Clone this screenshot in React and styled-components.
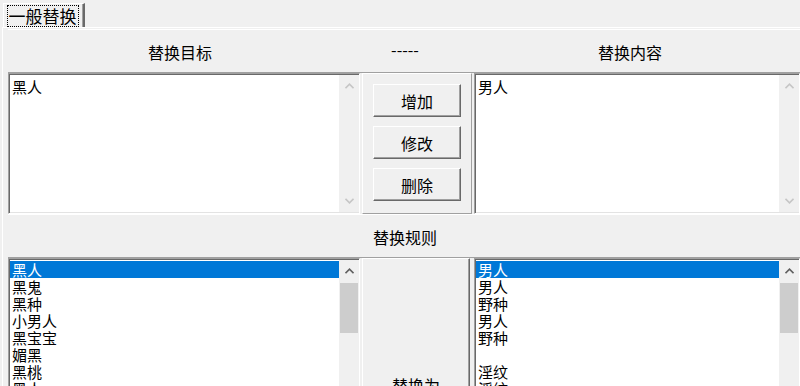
import React from 'react'
import styled, { createGlobalStyle } from 'styled-components'

const Global = createGlobalStyle`
  html, body { margin: 0; padding: 0; background: #f0f0f0; }
  body { font-family: "Noto Sans CJK SC", "Liberation Sans", sans-serif; color: #000; }
`

const Window = styled.div`
  width: 800px;
  height: 386px;
  overflow: hidden;
  background: #f0f0f0;
  font-size: 15px;
`

const TabStrip = styled.div`
  height: 27px;
  display: flex;
  align-items: flex-end;
  padding-left: 3px;
`

const Tab = styled.div`
  height: 24px;
  width: 82px;
  box-sizing: border-box;
  border-top: 1px solid #fff;
  border-left: 1px solid #fff;
  border-right: 2px solid #696969;
  box-shadow: inset -1px 0 0 #a0a0a0;
  display: flex;
  align-items: center;
  justify-content: center;
  padding-right: 2px;
`

const FocusText = styled.span`
  outline: 1px dotted #000;
  padding: 0 1px;
  line-height: 20px;
  font-size: 17px;
`

const Panel = styled.div`
  margin-left: 2px;
  border-top: 1px solid #fff;
  border-left: 1px solid #fff;
  padding: 1px 0 0 5px;
`

const HeaderRow = styled.div`
  height: 44px;
  display: grid;
  grid-template-columns: ${p => p.$cols || '1fr'};
  align-items: center;
  border-top: 1px solid #fff;
  border-bottom: 1px solid #a0a0a0;
  box-sizing: border-box;
  width: 794px;
`

const HeaderLabel = styled.div`
  text-align: center;
  font-size: 16px;
  padding-top: ${p => p.$dash ? '0' : '2px'};
  padding-bottom: ${p => p.$dash ? '4px' : '0'};
`

const Row = styled.div`
  display: grid;
  grid-template-columns: 352px 110px 326px;
  column-gap: 2px;
  height: ${p => p.$h}px;
`

const Sunken = styled.div`
  display: flex;
  background: #fff;
  border-top: 1px solid #a0a0a0;
  border-left: 1px solid #a0a0a0;
  border-right: 1px solid #fff;
  border-bottom: 1px solid #fff;
  box-shadow: inset 1px 1px 0 #696969, inset -1px -1px 0 #e3e3e3;
  padding: 1px 0 1px 1px;
  overflow: hidden;
`

const TextBody = styled.div`
  flex: 1;
  padding: 3px 2px;
  line-height: 17px;
`

const ListBody = styled.div`
  flex: 1;
  padding-top: 1px;
`

const Item = styled.div`
  height: 17px;
  line-height: 17px;
  padding-left: 2px;
  white-space: nowrap;
  background: ${p => p.$sel ? '#0078d7' : 'transparent'};
  color: ${p => p.$sel ? '#fff' : '#000'};
`

const ScrollBar = styled.div`
  width: 20px;
  flex: none;
  background: #f0f0f0;
  display: flex;
  flex-direction: column;
`

const ArrowBox = styled.div`
  height: 22px;
  display: flex;
  align-items: center;
  justify-content: center;
  flex: none;
`

const Thumb = styled.div`
  height: 50px;
  margin: 1px 1px 0;
  background: #cdcdcd;
`

const Spacer = styled.div`
  flex: 1;
`

const Middle = styled.div`
  border-top: 1px solid #fff;
  border-left: 1px solid #fff;
  border-right: 1px solid #a0a0a0;
  border-bottom: 1px solid #a0a0a0;
  display: flex;
  flex-direction: column;
  align-items: center;
  padding-top: 10px;
  gap: 9px;
`

const Button = styled.div`
  width: 88px;
  height: 33px;
  box-sizing: border-box;
  background: #f0f0f0;
  border-top: 1px solid #fff;
  border-left: 1px solid #fff;
  border-right: 1px solid #696969;
  border-bottom: 1px solid #696969;
  box-shadow: inset -1px -1px 0 #a0a0a0;
  display: flex;
  align-items: center;
  justify-content: center;
  font-size: 16px;
  flex: none;
`

const BigButton = styled(Button)`
  width: 108px;
  height: 254px;
`

const Chevron = ({ up, color }) => (
  <svg width="9" height="6" viewBox="0 0 9 6">
    <path
      d={up ? 'M0.5 5.2 L4.5 1.2 L8.5 5.2' : 'M0.5 0.8 L4.5 4.8 L8.5 0.8'}
      fill="none"
      stroke={color}
      strokeWidth="1.6"
    />
  </svg>
)

const VScroll = ({ disabled }) => {
  const c = disabled ? '#c6c6c6' : '#606060'
  return (
    <ScrollBar>
      <ArrowBox><Chevron up color={c} /></ArrowBox>
      {disabled ? <Spacer /> : <Thumb />}
      {disabled && <ArrowBox><Chevron color={c} /></ArrowBox>}
    </ScrollBar>
  )
}

const leftRules = ['黑人', '黑鬼', '黑种', '小男人', '黑宝宝', '媚黑', '黑桃', '黑人']
const rightRules = ['男人', '男人', '野种', '男人', '野种', '', '淫纹', '淫纹']

const App = () => (
  <Window>
    <Global />
    <TabStrip>
      <Tab><FocusText>一般替换</FocusText></Tab>
    </TabStrip>
    <Panel>
      <HeaderRow $cols="344px 106px 1fr">
        <HeaderLabel>替换目标</HeaderLabel>
        <HeaderLabel $dash>-----</HeaderLabel>
        <HeaderLabel>替换内容</HeaderLabel>
      </HeaderRow>
      <Row $h={141}>
        <Sunken>
          <TextBody>黑人</TextBody>
          <VScroll disabled />
        </Sunken>
        <Middle>
          <Button>增加</Button>
          <Button>修改</Button>
          <Button>删除</Button>
        </Middle>
        <Sunken>
          <TextBody>男人</TextBody>
          <VScroll disabled />
        </Sunken>
      </Row>
      <HeaderRow>
        <HeaderLabel>替换规则</HeaderLabel>
      </HeaderRow>
      <Row $h={260}>
        <Sunken>
          <ListBody>
            {leftRules.map((t, i) => <Item key={i} $sel={i === 0}>{t}</Item>)}
          </ListBody>
          <VScroll />
        </Sunken>
        <BigButton>替换为</BigButton>
        <Sunken>
          <ListBody>
            {rightRules.map((t, i) => <Item key={i} $sel={i === 0}>{t}</Item>)}
          </ListBody>
          <VScroll />
        </Sunken>
      </Row>
    </Panel>
  </Window>
)

export default App
